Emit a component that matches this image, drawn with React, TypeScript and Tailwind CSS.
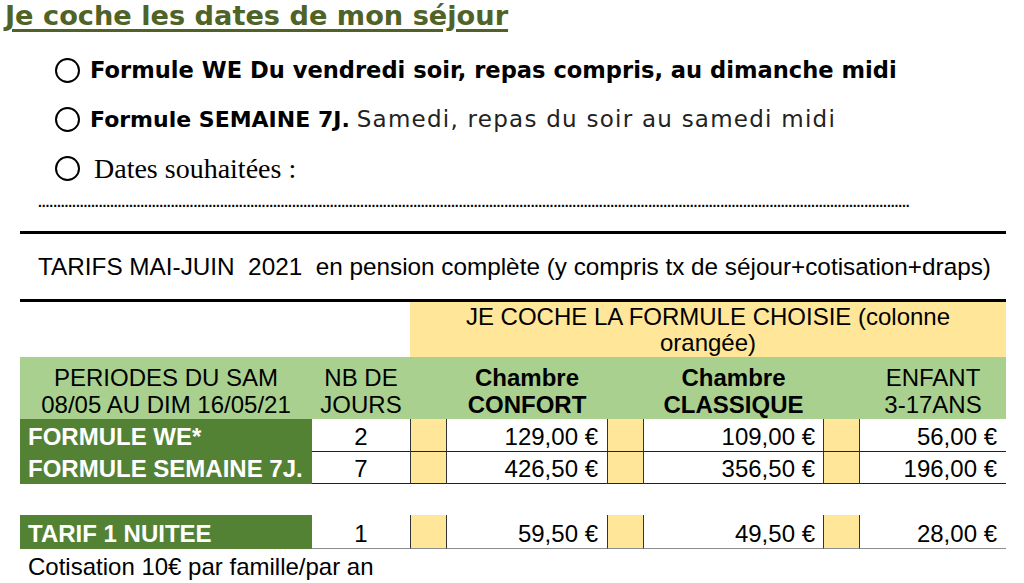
import React from "react";

const arial = "font-['Liberation_Sans',Arial,sans-serif]";
const gothic = "font-['DejaVu_Sans',sans-serif]";

function Radio({ children }: { children: React.ReactNode }) {
  return (
    <div className="h-[49px] flex items-center pl-[55px]">
      <span className="w-[25px] h-[25px] rounded-full border-[2.5px] border-black shrink-0" />
      {children}
    </div>
  );
}

function YellowCell({ bottom }: { bottom: string }) {
  return <div className={`bg-[#ffe699] border-x border-x-[#333] ${bottom}`} />;
}

type Row = { label: string; n: string; a: string; b: string; c: string; last?: boolean };

function DataRow({ r }: { r: Row }) {
  const bb = r.last ? "border-b border-b-[#8c8c8c]" : "border-b border-b-[#222]";
  return (
    <>
      <div className="bg-[#548235] text-white font-bold pl-[8px] flex items-end whitespace-nowrap pb-[1px]">{r.label}</div>
      <div className={`bg-white ${bb} flex items-end justify-center`}>{r.n}</div>
      <YellowCell bottom={bb} />
      <div className={`bg-white ${bb} flex items-end justify-end pr-[9px]`}>{r.a}</div>
      <YellowCell bottom={bb} />
      <div className={`bg-white ${bb} flex items-end justify-end pr-[8px]`}>{r.b}</div>
      <YellowCell bottom={bb} />
      <div className={`bg-white ${bb} flex items-end justify-end pr-[9px]`}>{r.c}</div>
    </>
  );
}

export default function App() {
  const cols = "grid grid-cols-[292px_98px_37px_160px_37px_179px_37px_146px]";
  return (
    <div className="w-[1024px] h-[583px] bg-white overflow-hidden text-black">
      <div className="h-[46px] pl-[5px]">
        <span
          className={`${gothic} font-bold text-[27.2px] leading-[32px] text-[#4f6228] underline decoration-[3px] underline-offset-[4px]`}
        >
          Je coche les dates de mon séjour
        </span>
      </div>

      <Radio>
        <span className={`${gothic} font-bold text-[22.6px] ml-[10px] whitespace-nowrap`}>
          Formule WE Du vendredi soir, repas compris, au dimanche midi
        </span>
      </Radio>
      <Radio>
        <span className={`${gothic} text-[22px] ml-[10px] whitespace-nowrap`}>
          <span className="font-bold">Formule SEMAINE 7J.</span>{" "}
          <span className="text-[23px] tracking-[1.25px] text-[#222]">Samedi, repas du soir au samedi midi</span>
        </span>
      </Radio>
      <Radio>
        <span className="font-['Liberation_Serif',serif] text-[28px] ml-[14px] whitespace-nowrap">
          Dates souhaitées :
        </span>
      </Radio>

      <div className="h-[22px] pl-[38px] flex items-start pt-[2px]">
        <div className={`${arial} font-bold text-[14px] leading-[14px] whitespace-nowrap tracking-[-0.1px]`}>
          {".".repeat(230)}
        </div>
      </div>

      <div className={`ml-[20px] w-[986px] mt-[16px] ${arial} text-[24px] leading-[28px]`}>
        <div className="h-[3px] bg-black" />
        <div className="h-[65px] flex items-center pl-[18px] whitespace-pre text-[24.3px]">
          TARIFS MAI-JUIN  2021  en pension complète (y compris tx de séjour+cotisation+draps)
        </div>
        <div className="h-[3px] bg-black" />

        <div className={`${cols} h-[55px]`}>
          <div className="col-span-2" />
          <div className="col-span-6 bg-[#ffe699] flex flex-col items-center justify-center leading-[26px] text-center pt-[1px]">
            <span>JE COCHE LA FORMULE CHOISIE (colonne</span>
            <span>orangée)</span>
          </div>
        </div>

        <div className={`${cols} h-[62px] bg-[#a9d08e] leading-[27px] text-center`}>
          <div className="flex flex-col justify-center items-center pt-[6px]">
            <span>PERIODES DU SAM</span>
            <span>08/05 AU DIM 16/05/21</span>
          </div>
          <div className="flex flex-col justify-center items-center pt-[6px]">
            <span>NB DE</span>
            <span>JOURS</span>
          </div>
          <div />
          <div className="flex flex-col justify-center items-center font-bold pt-[6px]">
            <span>Chambre</span>
            <span>CONFORT</span>
          </div>
          <div />
          <div className="flex flex-col justify-center items-center font-bold pt-[6px]">
            <span>Chambre</span>
            <span>CLASSIQUE</span>
          </div>
          <div />
          <div className="flex flex-col justify-center items-center pt-[6px]">
            <span>ENFANT</span>
            <span>3-17ANS</span>
          </div>
        </div>

        <div className={`${cols} grid-rows-[33px_32px]`}>
          <DataRow r={{ label: "FORMULE WE*", n: "2", a: "129,00 €", b: "109,00 €", c: "56,00 €" }} />
          <DataRow r={{ label: "FORMULE SEMAINE 7J.", n: "7", a: "426,50 €", b: "356,50 €", c: "196,00 €" }} />
        </div>

        <div className="h-[31px]" />

        <div className={`${cols} grid-rows-[34px]`}>
          <DataRow r={{ label: "TARIF 1 NUITEE", n: "1", a: "59,50 €", b: "49,50 €", c: "28,00 €", last: true }} />
        </div>

        <div className="pl-[8px] leading-[28px] mt-[4px]">Cotisation 10€ par famille/par an</div>
      </div>
    </div>
  );
}
